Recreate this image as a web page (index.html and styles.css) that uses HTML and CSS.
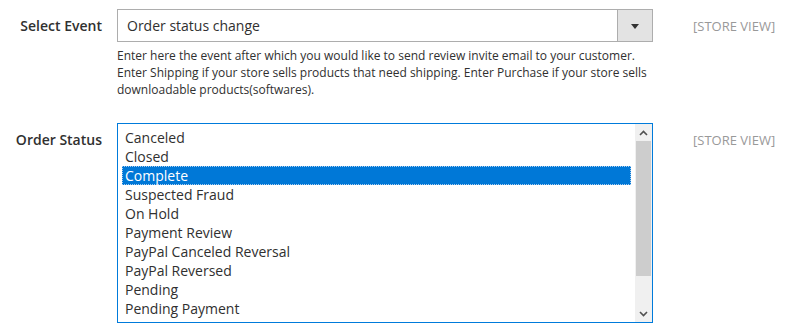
FILE: index.html
```html
<!DOCTYPE html>
<html lang="en">
<head>
    <meta charset="UTF-8">
    <title>Review Invite Settings</title>
    <link rel="stylesheet" href="styles.css">
</head>
<body>
    <div class="config-form">
        <div class="config-row">
            <label class="field-label">Select Event</label>
            <div class="field-control">
                <div class="select-box">
                    <span class="select-value">Order status change</span>
                    <span class="select-arrow"></span>
                </div>
                <p class="field-note">Enter here the event after which you would like to send review invite email to your customer. Enter Shipping if your store sells products that need shipping. Enter Purchase if your store sells downloadable products(softwares).</p>
            </div>
            <div class="field-scope">[STORE VIEW]</div>
        </div>
        <div class="config-row">
            <label class="field-label">Order Status</label>
            <div class="field-control">
                <div class="list-box">
                    <ul class="list-options">
                        <li>Canceled</li>
                        <li>Closed</li>
                        <li class="selected">Complete</li>
                        <li>Suspected Fraud</li>
                        <li>On Hold</li>
                        <li>Payment Review</li>
                        <li>PayPal Canceled Reversal</li>
                        <li>PayPal Reversed</li>
                        <li>Pending</li>
                        <li>Pending Payment</li>
                    </ul>
                    <div class="scrollbar">
                        <div class="scroll-btn">
                            <svg width="9" height="6" viewBox="0 0 9 6"><path d="M1 5 L4.5 1.5 L8 5" fill="none" stroke="#505050" stroke-width="1.6"/></svg>
                        </div>
                        <div class="scroll-track">
                            <div class="scroll-thumb"></div>
                        </div>
                        <div class="scroll-btn">
                            <svg width="9" height="6" viewBox="0 0 9 6"><path d="M1 1 L4.5 4.5 L8 1" fill="none" stroke="#505050" stroke-width="1.6"/></svg>
                        </div>
                    </div>
                </div>
            </div>
            <div class="field-scope">[STORE VIEW]</div>
        </div>
    </div>
</body>
</html>
```

FILE: styles.css
```css
body {
    margin: 0;
    background: #ffffff;
    color: #303030;
    font-family: "Open Sans", "Liberation Sans", sans-serif;
}

.config-form {
    display: flex;
    flex-direction: column;
    gap: 25px;
    padding-top: 9px;
}

.config-row {
    display: grid;
    grid-template-columns: 117px 536px 1fr;
    align-items: start;
}

.field-label {
    padding: 7px 15px 0 0;
    font-size: 14px;
    font-weight: 600;
    line-height: 19px;
    text-align: right;
}

.field-scope {
    padding: 8px 0 0 40px;
    font-size: 13px;
    line-height: 19px;
    color: #999999;
}

.select-box {
    display: flex;
    height: 33px;
    box-sizing: border-box;
    border: 1px solid #adadad;
    background: #fff;
}

.select-value {
    flex: 1;
    padding: 6px 9px;
    font-size: 14px;
    line-height: 19px;
}

.select-arrow {
    width: 34px;
    background: #e3e3e3;
    border-left: 1px solid #adadad;
    display: flex;
    align-items: center;
    justify-content: center;
}

.select-arrow::after {
    content: "";
    border-left: 4px solid transparent;
    border-right: 4px solid transparent;
    border-top: 5px solid #333;
    margin-top: 1px;
}

.field-note {
    margin: 6px 0 0;
    font-size: 12px;
    line-height: 16.8px;
}

.list-box {
    display: flex;
    height: 200px;
    box-sizing: border-box;
    border: 1px solid #007bdb;
    background: #fff;
}

.list-options {
    flex: 1;
    list-style: none;
    margin: 0;
    padding: 4px 4px 0;
    overflow: hidden;
}

.list-options li {
    height: 19px;
    padding-left: 3px;
    font-size: 14px;
    line-height: 19px;
    white-space: nowrap;
}

.list-options li.selected {
    background: #0078d7;
    color: #fff;
    outline: 1px dotted #a9cdef;
    outline-offset: -1px;
}

.scrollbar {
    width: 17px;
    display: flex;
    flex-direction: column;
    background: #f0f0f0;
}

.scroll-btn {
    height: 17px;
    display: flex;
    align-items: center;
    justify-content: center;
}

.scroll-track {
    flex: 1;
}

.scroll-thumb {
    height: 135px;
    margin: 0 1px;
    background: #cdcdcd;
}
```
